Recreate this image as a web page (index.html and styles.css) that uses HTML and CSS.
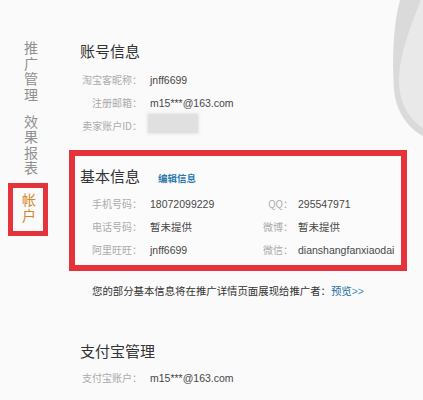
FILE: index.html
```html
<!DOCTYPE html>
<html lang="zh-CN">
<head>
<meta charset="utf-8">
<title>账户</title>
<link rel="stylesheet" href="styles.css">
</head>
<body>
<div class="page">
  <nav class="nav">
    <div class="nav-item">推广管理</div>
    <div class="nav-item second">效果报表</div>
    <div class="nav-item active">帐户</div>
  </nav>
  <main class="main">
    <section class="sec">
      <h2 class="title">账号信息</h2>
      <div class="row"><span class="lbl">淘宝客昵称：</span><span class="val">jnff6699</span></div>
      <div class="row"><span class="lbl">注册邮箱：</span><span class="val">m15***@163.com</span></div>
      <div class="row"><span class="lbl">卖家账户ID：</span><span class="blur"></span></div>
    </section>
    <section class="box">
      <div class="box-head"><h2 class="title">基本信息</h2><span class="edit">编辑信息</span></div>
      <div class="grid">
        <span class="lbl">手机号码：</span><span class="val">18072099229</span>
        <span class="lbl2">QQ：</span><span class="val">295547971</span>
        <span class="lbl">电话号码：</span><span class="val">暂未提供</span>
        <span class="lbl2">微博：</span><span class="val">暂未提供</span>
        <span class="lbl">阿里旺旺：</span><span class="val">jnff6699</span>
        <span class="lbl2">微信：</span><span class="val">dianshangfanxiaodai</span>
      </div>
    </section>
    <p class="note">您的部分基本信息将在推广详情页面展现给推广者：<span class="link">预览</span><span class="arrows">&gt;&gt;</span></p>
    <section class="sec pay">
      <h2 class="title">支付宝管理</h2>
      <div class="row"><span class="lbl">支付宝账户：</span><span class="val">m15***@163.com</span></div>
    </section>
  </main>
  <svg class="deco" width="36" height="140" viewBox="387 0 36 140" aria-hidden="true">
    <path d="M400,0 C393,25 392,60 394,90 C396,112 408,128 423,136 L423,0 Z" fill="#dadada"/>
    <path d="M421,0 C411,25 399,55 399,80 C399,104 410,120 423,128 L423,0 Z" fill="#e9e9e9"/>
  </svg>
</div>
</body>
</html>
```
FILE: styles.css
```css
html, body {
  margin: 0;
  padding: 0;
}
body {
  background: #fafafa;
  font-family: "Liberation Sans", "Noto Sans CJK SC", sans-serif;
  color: #444;
  width: 423px;
  height: 400px;
  overflow: hidden;
}
.page {
  position: relative;
  display: flex;
  width: 423px;
  height: 400px;
}
.nav {
  width: 69px;
  flex: none;
  padding: 40px 0 0 8px;
  box-sizing: border-box;
  display: flex;
  flex-direction: column;
  align-items: flex-start;
}
.nav-item {
  width: 40px;
  box-sizing: border-box;
  padding: 0 10px 0 16px;
  text-align: center;
  font-family: "Noto Sans CJK SC", sans-serif;
  font-size: 14px;
  line-height: 15.5px;
  color: #909090;
  word-break: break-all;
}
.nav-item.second {
  margin-top: 11.5px;
}
.nav-item.active {
  margin-top: 7.5px;
  border: 5px solid #e5333b;
  padding: 4px 7px 8px 9px;
  color: #d4862f;
}
.main {
  width: 338px;
  flex: none;
  padding-top: 41px;
}
.title {
  margin: 0;
  font-family: "Noto Sans CJK SC", sans-serif;
  font-weight: 400;
  font-size: 15px;
  line-height: 20px;
  color: #333;
}
.sec {
  padding-left: 11px;
}
.sec .title {
  margin-bottom: 7px;
}
.row {
  display: flex;
  align-items: center;
  height: 23px;
}
.lbl {
  width: 62px;
  flex: none;
  text-align: right;
  margin-right: 8px;
  font-family: "Noto Sans CJK SC", sans-serif;
  font-size: 10px;
  color: #ababab;
  white-space: nowrap;
}
.val {
  font-size: 10.5px;
  color: #484848;
  white-space: nowrap;
}
.blur {
  width: 50px;
  height: 19px;
  margin-top: -4px;
  margin-left: -2px;
  background: #e0e0e0;
  box-shadow: 0 0 3px 1px #e4e4e4;
}
.box {
  margin-top: 13px;
  border: 6px solid #e5333b;
  padding: 10px 0 4px 5px;
  background: #fbfbfb;
}
.box-head {
  display: flex;
  align-items: center;
}
.edit {
  margin-left: 18px;
  margin-top: 3px;
  font-family: "Noto Sans CJK SC", sans-serif;
  font-size: 9.5px;
  font-weight: 700;
  color: #2b78ad;
}
.grid {
  margin-top: 6px;
  display: grid;
  grid-template-columns: 70px 110px 38px auto;
  grid-auto-rows: 23px;
  align-items: center;
}
.grid .lbl {
  width: auto;
  margin-right: 0;
  padding-right: 8px;
}
.grid .lbl2 {
  text-align: right;
  padding-right: 5px;
  font-family: "Noto Sans CJK SC", sans-serif;
  font-size: 10px;
  color: #ababab;
  white-space: nowrap;
}
.note {
  margin: 10px 0 0 23px;
  font-family: "Noto Sans CJK SC", sans-serif;
  font-size: 10.4px;
  line-height: 20px;
  color: #333;
  white-space: nowrap;
}
.link {
  color: #1d6fa6;
}
.arrows {
  color: #4a8ab8;
  font-family: "Liberation Sans", sans-serif;
}
.pay {
  margin-top: 39px;
}
.pay .title {
  margin-bottom: 5px;
}
.deco {
  position: absolute;
  right: 0;
  top: 0;
}
```
